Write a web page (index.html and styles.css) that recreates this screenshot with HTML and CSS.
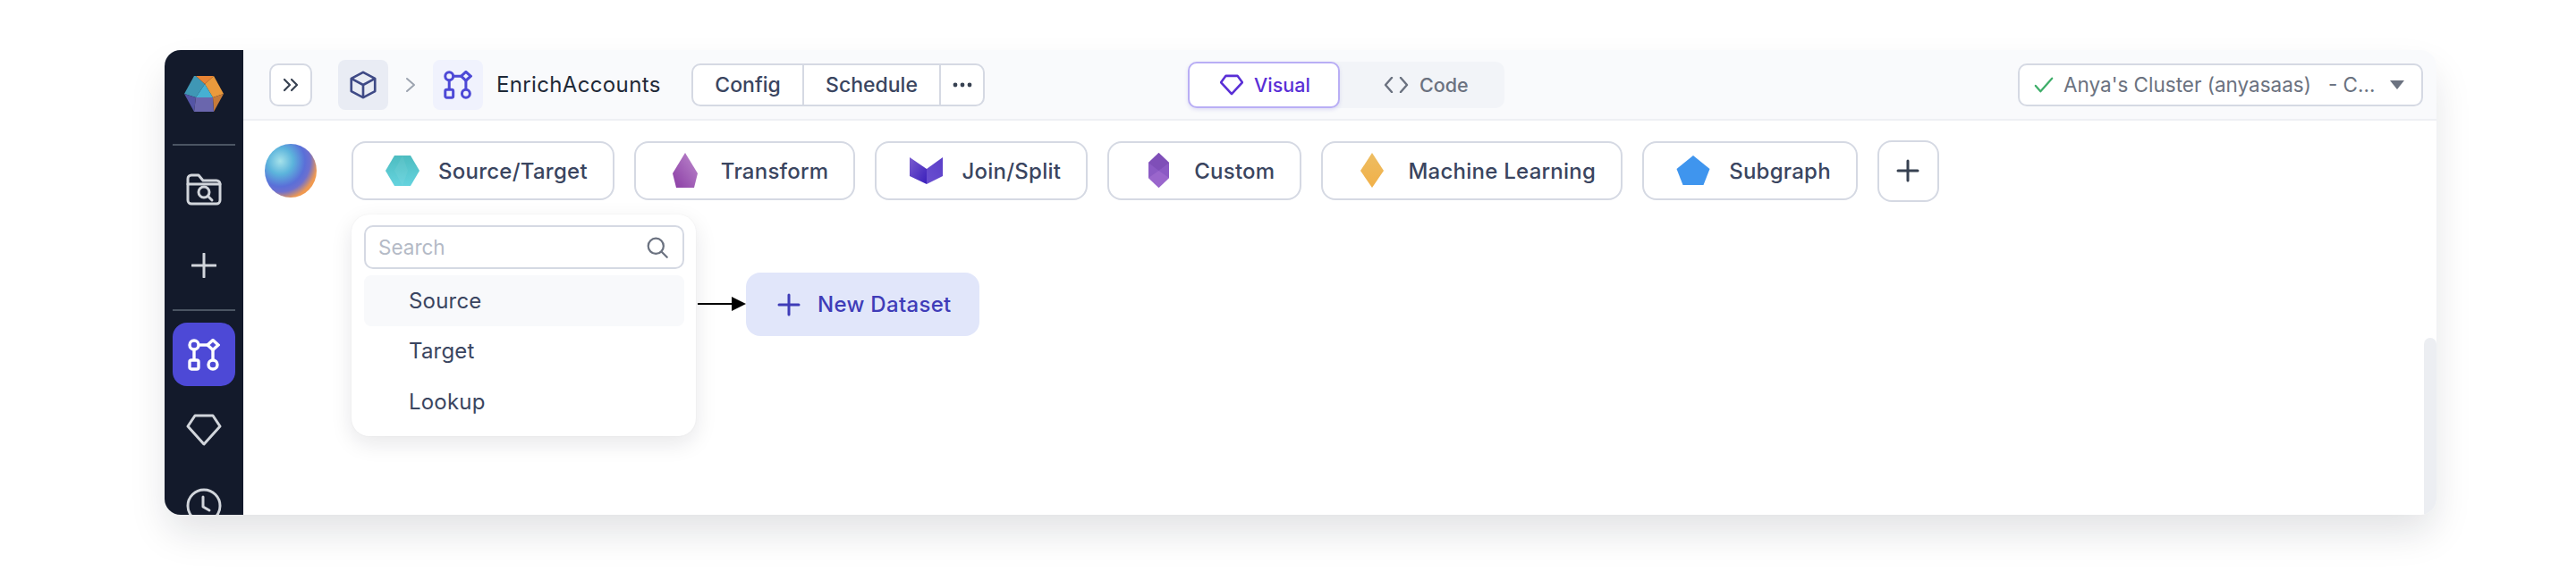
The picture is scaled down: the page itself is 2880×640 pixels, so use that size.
FILE: index.html
```html
<!DOCTYPE html>
<html lang="en">

<head>
  <meta charset="UTF-8">
  <title>EnrichAccounts</title>
  <link rel="stylesheet" href="styles.css">
</head>

<body>

  <svg class="defs" width="0" height="0">
    <defs>
      <symbol id="graph" viewBox="0 0 36 36">
        <g fill="none" stroke="currentColor" stroke-width="3.4">
          <circle cx="7" cy="7" r="5" />
          <path d="M12 7h10" />
          <path d="M28 1.5l6 5.5-6 5.5-6-5.5z" />
          <path d="M7 12v11" />
          <path d="M28 12.5v11" />
          <rect x="2" y="24" width="10" height="10" rx="2" />
          <circle cx="28" cy="29" r="5" />
        </g>
      </symbol>
      <linearGradient id="teal" x1="0" y1="0" x2="0" y2="1">
        <stop offset="0" stop-color="#4dbcc0" />
        <stop offset="1" stop-color="#65d3de" />
      </linearGradient>
      <linearGradient id="plum" x1="1" y1="0" x2="0" y2="1">
        <stop offset="0" stop-color="#bd8acd" />
        <stop offset="1" stop-color="#8a3ca4" />
      </linearGradient>
      <linearGradient id="violet-left" x1="0" y1="0" x2="1" y2="1">
        <stop offset="0" stop-color="#7a5ccf" />
        <stop offset="1" stop-color="#3a1fbb" />
      </linearGradient>
      <linearGradient id="violet-right" x1="1" y1="0" x2="0" y2="1">
        <stop offset="0" stop-color="#5b3fc8" />
        <stop offset="1" stop-color="#6a4fd0" />
      </linearGradient>
      <linearGradient id="amber" x1="0" y1="0" x2="0" y2="1">
        <stop offset="0" stop-color="#edbd62" />
        <stop offset="1" stop-color="#f1b048" />
      </linearGradient>
      <radialGradient id="orb" cx="0.3" cy="0.32" r="0.82">
        <stop offset="0" stop-color="#a6e2ea" />
        <stop offset="0.3" stop-color="#5cb4dc" />
        <stop offset="0.58" stop-color="#5a6fd8" />
        <stop offset="0.7" stop-color="#6d70cf" />
        <stop offset="0.88" stop-color="#f0994f" />
      </radialGradient>
    </defs>
  </svg>

  <div class="app">

    <aside class="sidebar">
      <svg class="logo" width="44" height="40" viewBox="0 0 44 40">
        <path d="M11 0h2l10 9-10 15L0 20z" fill="#3f97b5" />
        <path d="M13 0h20L23 9z" fill="#e98434" />
        <path d="M33 0l11 20-12 4-9-15z" fill="#ea9a3c" />
        <path d="M44 20L33 40l-1-16z" fill="#c67a38" />
        <path d="M23 9l9 15H13z" fill="#46b0d2" />
        <path d="M0 20l13 4-2 16z" fill="#5455a5" />
        <path d="M13 24h19l1 16H11z" fill="#6a66ad" />
      </svg>
      <div class="side-line"></div>
      <button class="side-btn">
        <svg width="40" height="36" viewBox="0 0 40 36" fill="none" stroke="#d1d5db" stroke-width="3" stroke-linecap="round" stroke-linejoin="round">
          <path d="M2 10V6a4 4 0 0 1 4-4h8l5 6h15a4 4 0 0 1 4 4v18a4 4 0 0 1-4 4H6a4 4 0 0 1-4-4z" />
          <path d="M2 12h36" />
          <circle cx="20" cy="21" r="6" />
          <path d="M25 26l4 4" />
        </svg>
      </button>
      <button class="side-btn">
        <svg width="28" height="28" viewBox="0 0 28 28" stroke="#d1d5db" stroke-width="3" stroke-linecap="round">
          <path d="M14 1v26M1 14h26" />
        </svg>
      </button>
      <div class="side-line"></div>
      <button class="side-btn side-btn-active">
        <svg class="graph-icon" width="36" height="36"><use href="#graph" /></svg>
      </button>
      <button class="side-btn">
        <svg width="40" height="36" viewBox="0 0 40 36" fill="none" stroke="#d1d5db" stroke-width="3" stroke-linejoin="round">
          <path d="M10 2h20l8 12-18 20L2 14z" />
        </svg>
      </button>
      <button class="side-btn">
        <svg width="40" height="40" viewBox="0 0 40 40" fill="none" stroke="#d1d5db" stroke-width="3" stroke-linecap="round" stroke-linejoin="round">
          <circle cx="20" cy="20" r="18" />
          <path d="M19 10v11l7 4" />
        </svg>
      </button>
    </aside>

    <main class="main">

      <header class="topbar">
        <button class="expand-btn">
          <svg width="18" height="18" viewBox="0 0 18 18" fill="none" stroke="#374151" stroke-width="2.2" stroke-linecap="round" stroke-linejoin="round">
            <path d="M2 3l6 6-6 6M10 3l6 6-6 6" />
          </svg>
        </button>
        <div class="crumb crumb-project">
          <svg width="30" height="32" viewBox="0 0 34 36" fill="none" stroke="#3f4a86" stroke-width="3" stroke-linejoin="round">
            <path d="M17 2l15 8v16l-15 8-15-8V10z" />
            <path d="M2 10l15 8 15-8M17 18v16" />
          </svg>
        </div>
        <svg class="crumb-sep" width="12" height="18" viewBox="0 0 12 18" fill="none" stroke="#9ca3af" stroke-width="2" stroke-linecap="round" stroke-linejoin="round">
          <path d="M2 2l8 7-8 7" />
        </svg>
        <div class="crumb crumb-graph">
          <svg class="graph-icon" width="32" height="32"><use href="#graph" /></svg>
        </div>
        <span class="graph-name">EnrichAccounts</span>

        <div class="btn-group">
          <button class="group-btn group-config">Config</button>
          <button class="group-btn group-schedule">Schedule</button>
          <button class="group-btn group-more">
            <svg width="22" height="6" viewBox="0 0 22 6" fill="#374151">
              <circle cx="3" cy="3" r="2.4" />
              <circle cx="11" cy="3" r="2.4" />
              <circle cx="19" cy="3" r="2.4" />
            </svg>
          </button>
        </div>

        <div class="mode-tabs">
          <button class="mode-tab mode-tab-active">
            <svg width="26" height="24" viewBox="0 0 28 26" fill="none" stroke="currentColor" stroke-width="2.8" stroke-linejoin="round">
              <path d="M7 2h14l6 8-13 14L1 10z" />
            </svg>
            Visual
          </button>
          <button class="mode-tab">
            <svg width="28" height="18" viewBox="0 0 28 18" fill="none" stroke="currentColor" stroke-width="2.4" stroke-linecap="round" stroke-linejoin="round">
              <path d="M9 1L2 9l7 8M19 1l7 8-7 8" />
            </svg>
            Code
          </button>
        </div>

        <div class="cluster">
          <svg width="22" height="20" viewBox="0 0 24 20" fill="none" stroke="#3fae6a" stroke-width="2.4" stroke-linecap="round" stroke-linejoin="round">
            <path d="M2 11l6 7L22 2" />
          </svg>
          <span class="cluster-name">Anya's Cluster (anyasaas)&nbsp;&nbsp; - C...</span>
          <span class="caret"></span>
        </div>
      </header>

      <div class="canvas">
        <div class="scrollbar"></div>

        <div class="toolbar">
          <svg class="orb" width="58" height="60" viewBox="0 0 58 60">
            <ellipse cx="29" cy="30" rx="29" ry="30" fill="url(#orb)" />
          </svg>
          <button class="chip">
            <svg width="40" height="40" viewBox="0 0 40 40">
              <path d="M11 3h18l10 17-10 17H11L1 20z" fill="url(#teal)" />
              <path d="M20 3l6 17-6 17-9-17z" fill="#fff" opacity="0.06" />
            </svg>
            Source/Target
          </button>
          <button class="chip">
            <svg width="40" height="40" viewBox="0 0 40 40">
              <path d="M20 0l14 23-4 16H10L6 23z" fill="url(#plum)" />
            </svg>
            Transform
          </button>
          <button class="chip">
            <svg width="40" height="40" viewBox="0 0 40 40">
              <path d="M2 5l19 13v17L2 26z" fill="url(#violet-left)" />
              <path d="M39 5L21 18v17l18-9z" fill="url(#violet-right)" />
            </svg>
            Join/Split
          </button>
          <button class="chip">
            <svg width="40" height="40" viewBox="0 0 40 40">
              <path d="M20.5 0L32 11v17L20.5 39 9 28V11z" fill="#8b5ac4" />
              <path d="M9 11l11.5 9L32 11 20.5 0z" fill="#7f4fb8" />
              <path d="M9 28l11.5-8L32 28 20.5 39z" fill="#9a66cc" />
            </svg>
            Custom
          </button>
          <button class="chip">
            <svg width="40" height="40" viewBox="0 0 40 40">
              <path d="M20 0l13 20-13 19L7 20z" fill="url(#amber)" />
            </svg>
            Machine Learning
          </button>
          <button class="chip">
            <svg width="40" height="40" viewBox="0 0 40 40">
              <path d="M20 3l18.500 15-7 18h-23l-7-18z" fill="#3f95ee" />
            </svg>
            Subgraph
          </button>
          <button class="chip-add">
            <svg width="26" height="26" viewBox="0 0 26 26" stroke="#374151" stroke-width="3" stroke-linecap="round">
              <path d="M13 2v22M2 13h22" />
            </svg>
          </button>
        </div>

        <div class="flow">
          <div class="dropdown">
            <div class="search">
              <span class="search-hint">Search</span>
              <svg width="24" height="24" viewBox="0 0 28 28" fill="none" stroke="#6b7280" stroke-width="2.6" stroke-linecap="round">
                <circle cx="12" cy="12" r="10" />
                <path d="M19.500 19.500l7 7" />
              </svg>
            </div>
            <div class="menu-item menu-item-active">Source</div>
            <div class="menu-item">Target</div>
            <div class="menu-item">Lookup</div>
          </div>

          <svg class="arrow" width="54" height="18" viewBox="0 0 54 18">
            <path d="M0 9h40" stroke="#000" stroke-width="2" />
            <path d="M38 1l16 8-16 8z" fill="#000" />
          </svg>

          <button class="new-dataset">
            <svg width="26" height="26" viewBox="0 0 26 26" stroke="currentColor" stroke-width="3" stroke-linecap="round">
              <path d="M13 2v22M2 13h22" />
            </svg>
            New Dataset
          </button>
        </div>
      </div>

    </main>
  </div>

</body>

</html>
```

FILE: styles.css
```css
* {
  box-sizing: border-box;
}

body {
  margin: 0;
  padding: 56px 0 0 184px;
  height: 640px;
  overflow: hidden;
  background-color: white;
  font-family: Inter, "Liberation Sans", sans-serif;
  color: #3a4560;
}

button {
  font-family: inherit;
  cursor: pointer;
}

.defs {
  display: block;
}

.app {
  display: flex;
  width: 2540px;
  height: 520px;
  background-color: white;
  border-radius: 18px;
  overflow: hidden;
  box-shadow: 0 22px 44px -4px rgba(17, 24, 39, 0.13);
}

.sidebar {
  width: 88px;
  flex-shrink: 0;
  display: flex;
  flex-direction: column;
  align-items: center;
  gap: 13.5px;
  padding-top: 29px;
  background-color: #131a2b;
}

.logo {
  flex-shrink: 0;
  margin-bottom: 22.5px;
}

.side-line {
  flex-shrink: 0;
  width: 70px;
  height: 2px;
  background-color: #4b5563;
}

.side-btn {
  flex-shrink: 0;
  width: 70px;
  height: 71px;
  display: flex;
  align-items: center;
  justify-content: center;
  padding: 0;
  border: none;
  border-radius: 16px;
  background: none;
  color: white;
}

.side-btn-active {
  background-color: #4d49d6;
}

.main {
  flex: 1;
  min-width: 0;
  display: flex;
  flex-direction: column;
}

.topbar {
  height: 79px;
  flex-shrink: 0;
  display: flex;
  align-items: center;
  padding: 0 15px 0 29px;
  background-color: #f9fafc;
  border-bottom: 2px solid #eef0f4;
}

.expand-btn {
  width: 48px;
  height: 48px;
  display: flex;
  align-items: center;
  justify-content: center;
  padding: 0;
  background-color: white;
  border: 2px solid #d5d9e3;
  border-radius: 10px;
}

.crumb {
  width: 56px;
  height: 56px;
  display: flex;
  align-items: center;
  justify-content: center;
  border-radius: 8px;
}

.crumb-project {
  margin-left: 29px;
  background-color: #e9ecf4;
}

.crumb-sep {
  margin: 0 19px;
}

.crumb-graph {
  background-color: #f0f2fd;
}

.graph-icon {
  color: #4d49d6;
}

.side-btn-active .graph-icon {
  color: white;
}

.graph-name {
  width: 181px;
  margin-left: 15px;
  font-size: 24px;
  font-weight: 400;
  letter-spacing: 0.35px;
  color: #1f2937;
  white-space: nowrap;
}

.btn-group {
  display: flex;
  height: 48px;
  margin-left: 37px;
  background-color: white;
  border: 2px solid #d5d9e3;
  border-radius: 10px;
}

.group-btn {
  display: flex;
  align-items: center;
  justify-content: center;
  height: 100%;
  padding: 0;
  font-size: 23px;
  font-weight: 450;
  color: #3a4560;
  background: none;
  border: none;
  border-right: 2px solid #d5d9e3;
}

.group-config {
  width: 124px;
}

.group-schedule {
  width: 153px;
}

.group-more {
  width: 47px;
  border-right: none;
}

.mode-tabs {
  display: flex;
  height: 52px;
  margin-left: 227px;
  background-color: #f2f4f8;
  border-radius: 10px;
}

.mode-tab {
  display: flex;
  align-items: center;
  gap: 12px;
  width: 184px;
  padding: 0 0 0 49px;
  font-size: 21.5px;
  font-weight: 450;
  color: #6b7280;
  background: none;
  border: none;
  border-radius: 10px;
}

.mode-tab-active {
  width: 170px;
  padding-left: 34px;
  color: #5a2fd6;
  background-color: white;
  border: 2px solid #b9aef5;
  box-shadow: 0 2px 4px rgba(80, 70, 200, 0.15);
}

.cluster {
  display: flex;
  align-items: center;
  gap: 11px;
  width: 453px;
  height: 48px;
  margin-left: auto;
  padding: 0 19px 0 16px;
  font-size: 22.5px;
  color: #6b7280;
  background-color: white;
  border: 2px solid #d5d9e3;
  border-radius: 10px;
}

.cluster-name {
  flex: 1;
  white-space: nowrap;
}

.caret {
  width: 0;
  height: 0;
  border-left: 8px solid transparent;
  border-right: 8px solid transparent;
  border-top: 10px solid #6b7280;
}

.canvas {
  position: relative;
  flex: 1;
  min-height: 0;
  padding-left: 24px;
}

.scrollbar {
  position: absolute;
  right: 0;
  top: 243px;
  bottom: 0;
  width: 14px;
  background-color: #eceef2;
  border-radius: 7px 7px 0 0;
}

.toolbar {
  display: flex;
  align-items: center;
  gap: 22px;
  height: 70px;
  margin-top: 21px;
}

.orb {
  margin-right: 17px;
  flex-shrink: 0;
}

.chip {
  display: flex;
  align-items: center;
  gap: 20px;
  height: 66px;
  padding: 0 28px 0 35px;
  font-size: 24px;
  font-weight: 450;
  letter-spacing: 0.25px;
  color: #3a4560;
  background-color: white;
  border: 2px solid #d5d9e3;
  border-radius: 16px;
  white-space: nowrap;
}

.chip-add {
  width: 69px;
  height: 69px;
  display: flex;
  align-items: center;
  justify-content: center;
  padding: 0;
  background-color: white;
  border: 2px solid #d5d9e3;
  border-radius: 16px;
}

.flow {
  display: flex;
  align-items: flex-start;
  margin: 14px 0 0 97px;
}

.dropdown {
  width: 385px;
  height: 248px;
  flex-shrink: 0;
  padding: 12px 13px 0 14px;
  background-color: white;
  border-radius: 20px;
  box-shadow: 0 8px 24px rgba(17, 24, 39, 0.1), 0 0 2px rgba(17, 24, 39, 0.06);
}

.search {
  display: flex;
  align-items: center;
  justify-content: space-between;
  height: 49px;
  margin-bottom: 7px;
  padding: 0 16px 0 14px;
  border: 2px solid #d5d9e3;
  border-radius: 10px;
}

.search-hint {
  font-size: 22.5px;
  color: #b4bac6;
}

.menu-item {
  height: 56.5px;
  display: flex;
  align-items: center;
  padding-left: 50px;
  font-size: 24px;
  letter-spacing: 0.2px;
  color: #3a4560;
  border-radius: 8px;
}

.menu-item-active {
  background-color: #f8f9fb;
}

.arrow {
  flex-shrink: 0;
  margin: 91px 0 0 2px;
}

.new-dataset {
  display: flex;
  align-items: center;
  gap: 19px;
  width: 261px;
  height: 71px;
  margin-top: 65px;
  padding: 0 0 0 35px;
  font-size: 24px;
  font-weight: 450;
  letter-spacing: 0.3px;
  color: #3f3cb8;
  background-color: #e1e6fa;
  border: none;
  border-radius: 16px;
}
```
